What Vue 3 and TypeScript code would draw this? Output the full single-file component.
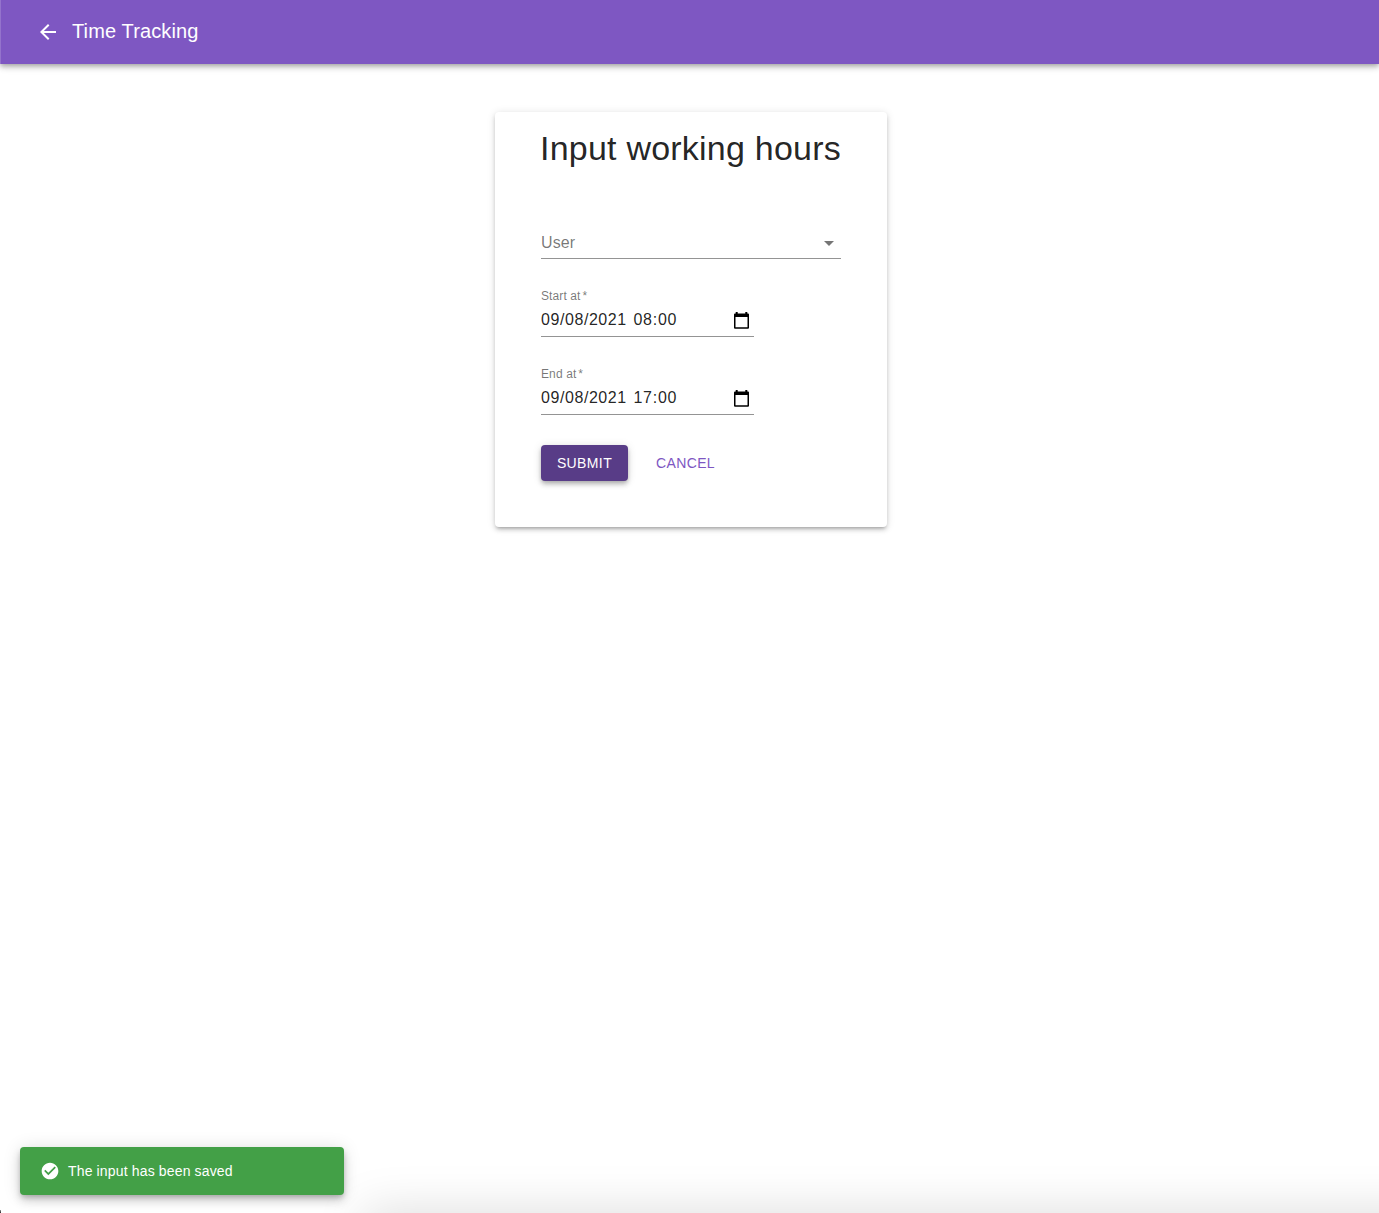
<script setup lang="ts">
interface DateField {
  id: string
  label: string
  date: string
  time: string
}

const fields: DateField[] = [
  { id: 'start', label: 'Start at', date: '09/08/2021', time: '08:00' },
  { id: 'end', label: 'End at', date: '09/08/2021', time: '17:00' },
]
</script>

<template>
  <div class="page">
    <header class="app-bar">
      <svg class="back" viewBox="0 0 24 24" aria-hidden="true">
        <path d="M20 11H7.83l5.59-5.59L12 4l-8 8 8 8 1.41-1.41L7.83 13H20v-2z" />
      </svg>
      <span class="app-title">Time Tracking</span>
    </header>

    <main class="content">
      <section class="card">
        <h1 class="heading">Input working hours</h1>
        <div class="select">
          <span class="select-label">User</span>
          <svg class="caret" viewBox="0 0 24 24" aria-hidden="true"><path d="M7 10l5 5 5-5z" /></svg>
        </div>
        <div v-for="field in fields" :key="field.id" class="field">
          <span class="field-label">{{ field.label }}<span class="star">*</span></span>
          <div class="field-value">
            <span class="date">{{ field.date }}</span>
            <span class="time">{{ field.time }}</span>
            <svg class="calendar" viewBox="0 0 15 18" aria-hidden="true">
              <path fill-rule="evenodd" d="M1.700 1H3.700V2.500H11.300V1H13.300V2.500H14Q15 2.500 15 3.500V16.700Q15 17.700 14 17.700H1Q0 17.700 0 16.700V3.500Q0 2.500 1 2.500H1.700ZM1.500 6V16.200H13.500V6Z" />
            </svg>
          </div>
        </div>
        <div class="actions">
          <button class="button primary" type="button">SUBMIT</button>
          <button class="button text" type="button">CANCEL</button>
        </div>
      </section>
    </main>

    <div class="edge-shade"></div>
    <div class="corner"></div>
    <div class="snackbar" role="status">
      <svg class="check" viewBox="0 0 24 24" aria-hidden="true">
        <path d="M12 2C6.480 2 2 6.480 2 12s4.480 10 10 10 10-4.480 10-10S17.520 2 12 2zm-2 15l-5-5 1.410-1.410L10 14.170l7.590-7.590L19 8l-9 9z" />
      </svg>
      <span>The input has been saved</span>
    </div>
  </div>
</template>

<style>
body {
  margin: 0;
  background: #fff;
}
</style>

<style scoped>
.page {
  position: relative;
  height: 1213px;
  overflow: hidden;
  box-sizing: border-box;
  font-family: "Liberation Sans", Helvetica, Arial, sans-serif;
  color: rgba(0, 0, 0, 0.87);
}
.app-bar {
  display: flex;
  align-items: center;
  box-sizing: border-box;
  height: 64px;
  padding-left: 35px;
  border-left: 1px solid #9473cc;
  background: #7e57c2;
  color: #fff;
  box-shadow: 0 2px 4px -1px rgba(0, 0, 0, 0.2), 0 4px 5px 0 rgba(0, 0, 0, 0.14), 0 1px 10px 0 rgba(0, 0, 0, 0.12);
}
svg {
  display: block;
  flex: none;
  fill: currentColor;
}
.back {
  width: 24px;
  height: 24px;
  margin-right: 12px;
}
.app-title {
  font-size: 20px;
  line-height: 32px;
  letter-spacing: 0.13px;
  padding-bottom: 2px;
}
.content {
  display: flex;
  justify-content: center;
  padding: 48px 0 0 3px;
}
.card {
  box-sizing: border-box;
  width: 392px;
  height: 415px;
  padding: 15px 46px 0;
  border-radius: 4px;
  background: #fff;
  box-shadow: 0 3px 3px -2px rgba(0, 0, 0, 0.2), 0 3px 4px 0 rgba(0, 0, 0, 0.14), 0 1px 8px 0 rgba(0, 0, 0, 0.12);
}
.heading {
  margin: 0 0 61px -1px;
  font-size: 34px;
  font-weight: 400;
  line-height: 42px;
  letter-spacing: 0.22px;
  white-space: nowrap;
}
.select {
  display: flex;
  justify-content: space-between;
  align-items: center;
  box-sizing: border-box;
  height: 29px;
  border-bottom: 1px solid #949494;
  color: rgba(0, 0, 0, 0.54);
}
.select-label {
  font-size: 16px;
  line-height: 18px;
  letter-spacing: 0.1px;
  padding-bottom: 2px;
}
.caret {
  width: 24px;
  height: 24px;
  margin-bottom: 2px;
}
.field {
  display: flex;
  flex-direction: column;
  box-sizing: border-box;
  width: 213px;
  height: 48px;
  margin-top: 30px;
  border-bottom: 1px solid #949494;
}
.field-label {
  font-size: 12px;
  line-height: 14px;
  letter-spacing: 0.11px;
  color: rgba(0, 0, 0, 0.54);
}
.star {
  margin-left: 2px;
}
.field-value {
  display: flex;
  align-items: center;
  height: 20px;
  margin-top: 7px;
  font-size: 16px;
  line-height: 20px;
}
.date {
  width: 92.5px;
  letter-spacing: 0.57px;
}
.time {
  letter-spacing: 0.72px;
}
.calendar {
  width: 15px;
  height: 18px;
  margin: 0 5px 0 auto;
  color: #000;
}
.actions {
  display: flex;
  gap: 20px;
  margin-top: 30px;
}
.button {
  height: 36px;
  padding: 0;
  border: 0;
  border-radius: 4px;
  font-family: inherit;
  font-size: 14px;
  line-height: 24px;
  letter-spacing: 0.38px;
}
.primary {
  width: 87px;
  background: #583c87;
  color: #fff;
  box-shadow: 0 2px 4px -1px rgba(0, 0, 0, 0.2), 0 4px 5px 0 rgba(0, 0, 0, 0.14), 0 1px 10px 0 rgba(0, 0, 0, 0.12);
}
.text {
  width: 75px;
  background: transparent;
  color: #7e57c2;
}
/* Soft shade rising from the lower window edge */
.edge-shade {
  position: absolute;
  left: 375px;
  right: -60px;
  bottom: -32px;
  height: 20px;
  box-shadow: 0 0 50px 12px rgba(0, 0, 0, 0.15);
}
.corner {
  position: absolute;
  left: 0;
  bottom: 0;
  width: 1px;
  height: 3px;
  background: linear-gradient(#999, #222);
}
.snackbar {
  position: absolute;
  left: 20px;
  bottom: 18px;
  display: flex;
  align-items: center;
  box-sizing: border-box;
  width: 324px;
  height: 48px;
  padding-left: 20px;
  border-radius: 4px;
  background: #43a047;
  color: #fff;
  font-size: 14px;
  line-height: 20px;
  letter-spacing: 0.15px;
  box-shadow: 0 3px 5px -1px rgba(0, 0, 0, 0.2), 0 6px 10px 0 rgba(0, 0, 0, 0.14), 0 1px 18px 0 rgba(0, 0, 0, 0.12);
}
.check {
  width: 20px;
  height: 20px;
  margin-right: 8px;
}
</style>
